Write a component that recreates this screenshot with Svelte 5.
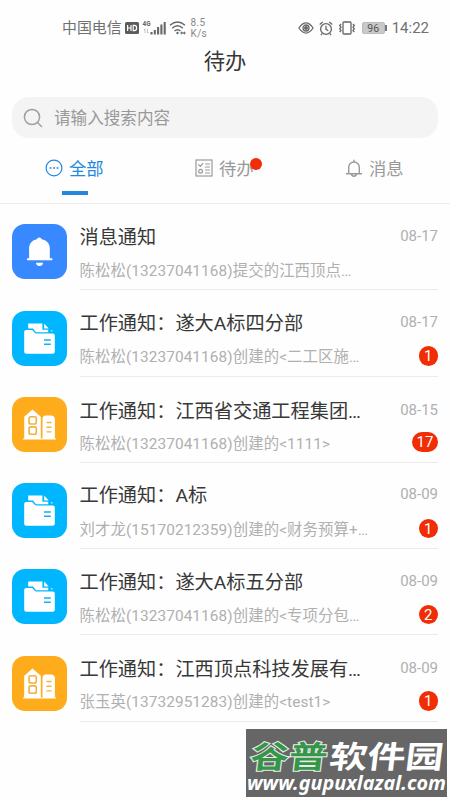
<script>
    const tabs = [
        { name: "全部", icon: "all", active: true },
        { name: "待办", icon: "todo", dot: true },
        { name: "消息", icon: "bell" },
    ];

    const messages = [
        { type: "bell", title: "消息通知", text: "陈松松(13237041168)提交的江西顶点…", date: "08-17" },
        { type: "folder", title: "工作通知：遂大A标四分部", text: "陈松松(13237041168)创建的<二工区施…", date: "08-17", count: 1 },
        { type: "building", title: "工作通知：江西省交通工程集团…", text: "陈松松(13237041168)创建的<1111>", date: "08-15", count: 17, low: true },
        { type: "folder", title: "工作通知：A标", text: "刘才龙(15170212359)创建的<财务预算+…", date: "08-09", count: 1 },
        { type: "folder", title: "工作通知：遂大A标五分部", text: "陈松松(13237041168)创建的<专项分包…", date: "08-09", count: 2 },
        { type: "building", title: "工作通知：江西顶点科技发展有…", text: "张玉英(13732951283)创建的<test1>", date: "08-09", count: 1, low: true },
    ];
</script>

<main>
    <div class="status">
        <span class="carrier">中国电信</span>
        <svg class="hd" width="14" height="12" viewBox="0 0 14 12">
            <rect width="14" height="12" rx="1.5" fill="#5c5c5c" />
            <path d="M2.6 3v6M6 3v6M2.6 6H6M8.2 3.4v5.2h1.2q2.2 0 2.2-2.6T9.4 3.4z" fill="none" stroke="#fff" stroke-width="1.2" />
        </svg>
        <svg class="signal" width="24" height="17" viewBox="0 0 24 17">
            <text x="0.5" y="6.5" font-size="7.5" font-weight="700" fill="#666" textLength="8" lengthAdjust="spacingAndGlyphs">4G</text>
            <path d="M3 10v4M2 11l1-1M5.5 10v4l1-1" fill="none" stroke="#aaa" stroke-width=".7" />
            <path d="M9.5 13v2.5M12.8 11v4.5M16.1 8v7.5M19.4 5.5v10M22.7 3v12.5" stroke="#686868" stroke-width="2.1" />
        </svg>
        <svg class="wifi" width="18" height="16" viewBox="0 0 18 16">
            <g fill="none" stroke="#686868" stroke-width="1.4">
                <path d="M1 5.3q7.5-6.5 15 0M3.2 8.2q5.3-4.7 10.6 0M5.5 11q3-2.6 6 0" />
            </g>
            <circle cx="8.5" cy="13" r="1.2" fill="#686868" />
            <path d="M11 13l2-1.8v1.1h2v-1.1l2 1.8-2 1.8v-1.1h-2v1.1z" fill="#777" />
        </svg>
        <span class="speed">8.5<br>K/s</span>
        <div class="right">
            <svg width="16" height="14" viewBox="0 0 16 14" fill="none" stroke="#666" stroke-width="1.3">
                <path d="M.9 7Q8-3.2 15.1 7 8 17.2.9 7z" />
                <circle cx="8" cy="7" r="3" />
                <circle cx="8" cy="7" r="1.3" fill="#666" />
            </svg>
            <svg width="14" height="15" viewBox="0 0 14 15" fill="none" stroke="#666" stroke-width="1.3">
                <circle cx="7" cy="8" r="5.4" />
                <path d="M7 4.8v3.6l2.3 1.4M.7 3.5L3.7 1M13.3 3.5L10.3 1M3 12.5l-1 1.6M11 12.5l1 1.6" />
            </svg>
            <svg width="18" height="14" viewBox="0 0 18 14" fill="none" stroke="#666" stroke-width="1.3">
                <rect x="5" y="1" width="8" height="12" rx="1" />
                <path d="M3 3L1.7 4.6 3 6.2 1.7 7.8 3 9.4 1.7 11M15 3l1.3 1.6L15 6.2l1.3 1.6L15 9.4l1.3 1.6" />
            </svg>
            <span class="battery">96</span>
            <span class="clock">14:22</span>
        </div>
    </div>

    <h1>待办</h1>

    <div class="search">
        <svg width="20" height="20" viewBox="0 0 20 20" fill="none" stroke="#a0a0a0" stroke-width="1.5">
            <circle cx="9" cy="9" r="7.6" />
            <path d="M14.5 14.5l4 4" stroke-linecap="round" />
        </svg>
        <span>请输入搜索内容</span>
    </div>

    <nav>
        {#each tabs as tab}
            <div class="tab" class:active={tab.active}>
                <svg width="18" height="18" viewBox="0 0 18 18" fill="none" stroke="currentColor" stroke-width="1.2">
                    {#if tab.icon === "all"}
                        <circle cx="9" cy="9" r="7.9" />
                        <path d="M4.6 9h1.8M8.1 9h1.8M11.6 9h1.8" stroke-width="1.7" />
                    {:else if tab.icon === "todo"}
                        <rect x="1" y="1" width="16" height="16" />
                        <path d="M3.3 5.3l2 2 2.8-3.2M10 5h5M10 8h5M10 11h5M10 14h5" />
                        <circle cx="5.6" cy="12.2" r="1.9" />
                    {:else}
                        <path d="M1 14.7h16M3.7 14.5V8.3a5.3 5.3 0 0 1 10.6 0v6.2M9 3V.8M6.5 15q.4 2.2 2.5 2.2t2.5-2.2" stroke-width="1.4" />
                    {/if}
                </svg>
                <span>{tab.name}</span>
                {#if tab.dot}<i class="dot"></i>{/if}
            </div>
        {/each}
    </nav>

    <div class="list">
        {#each messages as msg}
            <div class="row">
                <div class="tile {msg.type}">
                    <svg width="55" height="55" viewBox="0 0 55 55">
                        {#if msg.type === "bell"}
                            <path d="M17.1 34.2V24.5c0-5.2 3.2-8.4 7.7-9.2a2.6 2.6 0 0 1 5 0c4.6.8 8 4 8 9.2v9.7h1.8q1 0 1 1t-1 1H15.8q-1 0-1-1t1-1zM24 38.8h7q-.4 3.3-3.5 3.3T24 38.8z" fill="#fff" />
                        {:else if msg.type === "folder"}
                            <path d="M16.2 17.6V12.4h14.2v6.3h5.8v2.5H24l-3-3.6z" fill="#fff" />
                            <path d="M32.2 12.6l4.5 5h-4.5zM38.5 19.2h1.8v1.8z" fill="#fff" />
                            <path d="M14 19.1h5.5q1 0 1.7.9l1.5 1.8q.7.8 1.8.8h16.3q2 0 2 2v16.1q0 2-2 2H14.2q-2 0-2-2V21.1q0-2 1.8-2z" fill="#fff" />
                            <path d="M32 28.9h6.8M32 33.3h6.8" stroke="#0bb3f5" stroke-width="1.5" />
                        {:else}
                            <path d="M12.2 41.4V19.7l8.3-7.2 8.3 7.2v21.7h1.7V20.8q1-2.2 3.3-2.2h5.5q2.6 0 3.6 3v19.8H44v1.2H11v-1.2z" fill="#fff" />
                            <path d="M34.5 25.5h5M34.5 30.2h5M34.5 34.9h5" stroke="#f6b438" stroke-width="1.4" />
                            <g fill="none" stroke="#f3b13e" stroke-width="1.6">
                                <rect x="17" y="19.7" width="7.3" height="7.3" rx="1.8" />
                                <rect x="17" y="29.9" width="7.3" height="7.3" rx="1.8" />
                            </g>
                        {/if}
                    </svg>
                </div>
                <div class="body">
                    <div class="line top" class:low={msg.low}>
                        <span class="title">{msg.title}</span>
                        <span class="date">{msg.date}</span>
                    </div>
                    <div class="line">
                        <span class="text">{msg.text}</span>
                        {#if msg.count}
                            <span class="count" class:wide={msg.count > 9}>{msg.count}</span>
                        {/if}
                    </div>
                </div>
            </div>
        {/each}
    </div>

    <div class="watermark">
        <svg width="201" height="68" viewBox="0 0 201 68">
            <g class="brand" transform="translate(2 42) skewX(-7)">
                <text class="green" x="1" y="-3" textLength="77" lengthAdjust="spacingAndGlyphs">谷普</text>
                <text class="white" x="80" y="-3" textLength="114" lengthAdjust="spacingAndGlyphs">软件园</text>
            </g>
            <text class="url" x="1" y="61" textLength="199" lengthAdjust="spacingAndGlyphs">www.gupuxlazal.com</text>
        </svg>
    </div>
</main>

<style>
    :global(body) {
        background: #fff;
    }

    main {
        position: relative;
        width: 450px;
        height: 800px;
        overflow: hidden;
        background: #fefefe;
        font-family: Roboto, "Noto Sans CJK SC", sans-serif;
    }

    .status {
        display: flex;
        align-items: center;
        height: 40px;
        padding: 8px 21px 0 62px;
        box-sizing: border-box;
        color: #707070;
        margin-bottom: 4px;
    }

    .carrier {
        font-size: 14.9px;
        line-height: 20px;
        margin-top: 8px;
    }

    .hd {
        margin: 8px 0 0 3px;
    }

    .signal {
        margin: 7px 0 0 3px;
    }

    .wifi {
        margin: 8px 0 0 3px;
    }

    .speed {
        margin: 8px 0 0 4px;
        font-size: 10px;
        line-height: 11.5px;
        letter-spacing: 0.3px;
        color: #888;
    }

    .right {
        display: flex;
        align-items: center;
        margin: 8px 0 0 auto;
        gap: 5px;
    }

    .battery {
        position: relative;
        width: 23px;
        height: 12px;
        margin-left: 1px;
        border-radius: 2px;
        background: #c9c9c9;
        border: 1px solid #bbb;
        box-sizing: border-box;
        color: #555;
        font-size: 10.5px;
        line-height: 11px;
        text-align: center;
    }

    .battery::after {
        content: "";
        position: absolute;
        right: -3px;
        top: 2px;
        width: 2px;
        height: 6px;
        background: #777;
    }

    .clock {
        font-size: 15px;
        line-height: 18px;
        margin-left: 2px;
    }

    h1 {
        margin: 0;
        height: 53px;
        line-height: 36px;
        text-align: center;
        font-size: 21.3px;
        font-weight: 400;
        color: #383838;
    }

    .search {
        display: flex;
        align-items: center;
        gap: 11px;
        height: 41px;
        margin: 0 12px;
        padding-left: 11px;
        border-radius: 17px;
        background: #f4f4f4;
        color: #999;
        font-size: 16.6px;
    }

    .search span {
        margin-top: -2px;
    }

    nav {
        display: grid;
        grid-template-columns: repeat(3, 150px);
        height: 66px;
        box-sizing: border-box;
        border-bottom: 1px solid #ededed;
    }

    .tab {
        position: relative;
        display: flex;
        align-items: center;
        justify-content: center;
        gap: 6px;
        height: 60px;
        padding-right: 1.5px;
        box-sizing: border-box;
        color: #999;
        font-size: 17.3px;
    }

    .tab span {
        margin-top: -1px;
    }

    .tab.active {
        color: #2387df;
    }

    .tab.active::after {
        content: "";
        position: absolute;
        left: 62px;
        top: 53px;
        width: 25.5px;
        height: 4px;
        background: #2387df;
    }

    .dot {
        position: absolute;
        left: 99.5px;
        top: 20px;
        width: 12px;
        height: 12px;
        border-radius: 50%;
        background: #f02d05;
    }

    .row {
        display: flex;
        gap: 12.5px;
        height: 86.25px;
        padding: 0 12px;
    }

    .tile {
        width: 55px;
        height: 55px;
        margin-top: 20.3px;
        border-radius: 13px;
        overflow: hidden;
    }

    .tile svg {
        display: block;
    }

    .tile.bell {
        background: #3888ff;
    }

    .tile.folder {
        background: #00b7ff;
    }

    .tile.building {
        background: #ffac1c;
    }

    .body {
        flex: 1;
        box-sizing: border-box;
        padding-top: 14.5px;
        border-bottom: 1px solid #ebebeb;
        white-space: nowrap;
    }

    .line {
        display: flex;
        align-items: center;
        justify-content: space-between;
        height: 34px;
    }

    .top.low {
        padding-top: 3px;
        height: 31px;
    }

    .title {
        font-size: 19.2px;
        color: #383838;
    }

    .date {
        font-size: 15px;
        color: #b0b0b0;
    }

    .text {
        margin-top: -1px;
        font-size: 15.4px;
        color: #b0b0b0;
        letter-spacing: 0.08px;
    }

    .count {
        width: 19.5px;
        height: 19.5px;
        border-radius: 10px;
        background: #f02d05;
        color: #fff;
        font-size: 15px;
        line-height: 20px;
        text-align: center;
    }

    .count.wide {
        width: 26px;
    }

    .watermark {
        position: absolute;
        left: 246px;
        top: 729px;
        width: 201px;
        height: 68px;
        background: #666;
    }

    .brand {
        font-family: "Noto Sans CJK SC", sans-serif;
        font-size: 31px;
        font-weight: 700;
    }

    .green {
        fill: #35964a;
        stroke: #e6eee6;
        stroke-width: 2px;
        paint-order: stroke;
    }

    .white {
        fill: #fff;
    }

    .url {
        font-family: "Noto Sans", "Open Sans", sans-serif;
        font-size: 19.5px;
        font-weight: 700;
        font-style: italic;
        fill: #fff;
    }
</style>
